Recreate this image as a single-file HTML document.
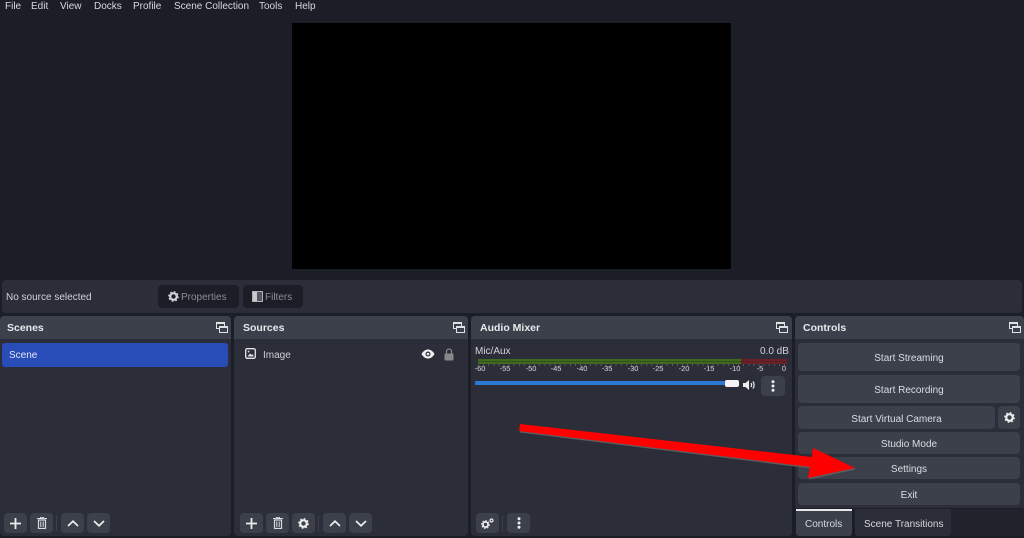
<!DOCTYPE html>
<html><head><meta charset="utf-8">
<style>
html,body{margin:0;padding:0;width:1024px;height:538px;overflow:hidden;background:#1b1d27;}
body{font-family:"Liberation Sans",sans-serif;font-size:10px;color:#d6d8de;position:relative;}
.a{position:absolute;box-sizing:border-box;}
.t{position:absolute;white-space:nowrap;}
.panel{position:absolute;background:#2b2e38;border-radius:4px;top:316px;height:220px;}
.title{position:absolute;left:0;right:0;top:0;height:23px;background:#3c404b;border-radius:4px 4px 0 0;}
.title span{position:absolute;left:7px;top:6px;font-weight:bold;font-size:10.5px;color:#e8e9ec;white-space:nowrap;}
.btn{position:absolute;background:#3c404b;border-radius:4px;display:flex;align-items:center;justify-content:center;color:#dcdee3;font-size:10px;padding-top:3px;box-sizing:border-box;}
.sb{position:absolute;background:#3c404b;border-radius:4px;top:513px;width:23px;height:20px;display:flex;align-items:center;justify-content:center;}
.dk{position:absolute;background:#1b1d27;border-radius:4px;top:285px;height:23px;}
.sep{position:absolute;top:515px;width:1px;height:16px;background:#3c404b;}
.tick{position:absolute;top:364px;font-size:7.5px;color:#d6d8de;transform:translateX(-50%);}
svg{display:block;}
</style></head>
<body>
<!-- menu -->
<div class="t" style="left:5px;top:1px">File</div>
<div class="t" style="left:31px;top:1px">Edit</div>
<div class="t" style="left:60px;top:1px">View</div>
<div class="t" style="left:94px;top:1px">Docks</div>
<div class="t" style="left:133px;top:1px">Profile</div>
<div class="t" style="left:174px;top:1px">Scene Collection</div>
<div class="t" style="left:259px;top:1px">Tools</div>
<div class="t" style="left:295px;top:1px">Help</div>
<!-- preview -->
<div class="a" style="left:292px;top:23px;width:439px;height:246px;background:#000"></div>
<!-- status -->
<div class="a" style="left:2px;top:280px;width:1020px;height:33px;background:#2b2e38;border-radius:4px"></div>
<div class="t" style="left:6px;top:292px;color:#d0d2d8">No source selected</div>
<div class="dk" style="left:158px;width:81px"></div>
<div class="dk" style="left:243px;width:60px"></div>
<svg class="a" style="left:168px;top:291px" width="11" height="11" viewBox="0 0 12 12"><circle cx="6" cy="6" r="3.6" fill="none" stroke="#d0d2d8" stroke-width="2.4"/><circle cx="6" cy="6" r="5.2" fill="none" stroke="#d0d2d8" stroke-width="1.3" stroke-dasharray="1.9 2.2"/></svg>
<div class="t" style="left:181px;top:292px;color:#8a8d96">Properties</div>
<svg class="a" style="left:252px;top:291px" width="11" height="11" viewBox="0 0 11 11"><rect x=".5" y=".5" width="10" height="10" fill="#555862" stroke="#b0b2b8"/><rect x="1" y="1" width="4" height="9" fill="#c8cad0"/></svg>
<div class="t" style="left:265px;top:292px;color:#8a8d96">Filters</div>

<!-- Scenes -->
<div class="panel" style="left:0;width:231px"><div class="title"><span>Scenes</span></div></div>
<div class="a" style="left:2px;top:343px;width:226px;height:24px;background:#284cb8;border-radius:3px"></div>
<div class="t" style="left:9px;top:350px;color:#e4e8f5">Scene</div>
<!-- Sources -->
<div class="panel" style="left:234px;width:234px"><div class="title"><span style="left:9px">Sources</span></div></div>
<svg class="a" style="left:245px;top:348px" width="11" height="11" viewBox="0 0 11 11"><rect x=".7" y=".7" width="9.6" height="9.6" rx="1.5" fill="none" stroke="#e4e5e8" stroke-width="1.3"/><path d="M2.5 8.5L5 5.5L6.5 7L7.5 6L8.8 8.500Z" fill="#e4e5e8"/><circle cx="3.6" cy="3.6" r=".9" fill="#e4e5e8"/></svg>
<div class="t" style="left:263px;top:350px;color:#d0d2d8">Image</div>
<svg class="a" style="left:421px;top:349px" width="14" height="10" viewBox="0 0 14 10"><path d="M.5 5C2.5 1.5 5 .5 7 .5S11.500 1.500 13.500 5C11.500 8.500 9 9.500 7 9.500S2.500 8.500.5 5Z" fill="#f0f0f2"/><circle cx="7" cy="5" r="2.500" fill="#2b2e38"/><circle cx="7" cy="5" r="1.300" fill="#f0f0f2"/></svg>
<svg class="a" style="left:444px;top:348px" width="10" height="13" viewBox="0 0 10 13"><path d="M2.500 6V3.500A2.500 2.500 0 0 1 7.500 3.500V6" fill="none" stroke="#85878d" stroke-width="1.200"/><rect x=".5" y="5.500" width="9" height="7" rx="1" fill="#85878d"/></svg>
<!-- Audio -->
<div class="panel" style="left:471px;width:321px"><div class="title"><span style="left:9px">Audio Mixer</span></div></div>
<div class="t" style="left:475px;top:346px;color:#d0d2d8">Mic/Aux</div>
<div class="t" style="left:760px;top:346px;color:#d0d2d8">0.0 dB</div>
<div class="a" style="left:478px;top:359px;width:263px;height:5px;background:#3f6a1c"></div>
<div class="a" style="left:741px;top:359px;width:46px;height:5px;background:#6e2028"></div>
<div class="a" style="left:478px;top:361px;width:309px;height:1px;background:rgba(30,34,40,.35)"></div>
<div class="a" style="left:478px;top:364px;width:309px;height:2px;background:repeating-linear-gradient(90deg,#565963 0,#565963 1px,transparent 1px,transparent 5.1px)"></div>
<div class="tick" style="left:480px">-60</div><div class="tick" style="left:505px">-55</div><div class="tick" style="left:531px">-50</div><div class="tick" style="left:556px">-45</div><div class="tick" style="left:582px">-40</div><div class="tick" style="left:607px">-35</div><div class="tick" style="left:633px">-30</div><div class="tick" style="left:658px">-25</div><div class="tick" style="left:684px">-20</div><div class="tick" style="left:709px">-15</div><div class="tick" style="left:735px">-10</div><div class="tick" style="left:760px">-5</div><div class="tick" style="left:784px">0</div>
<div class="a" style="left:475px;top:381px;width:252px;height:4px;background:#2a78d4"></div>
<div class="a" style="left:725px;top:380px;width:14px;height:7px;background:#f4f4f6;border-radius:2px"></div>
<svg class="a" style="left:743px;top:379px" width="13" height="12" viewBox="0 0 13 12"><path d="M0 4H2.500L6 1V11L2.500 8H0Z" fill="#eceded"/><path d="M8 4Q9.200 6 8 8M10 2.500Q12.200 6 10 9.500" fill="none" stroke="#eceded" stroke-width="1.200"/></svg>
<div class="btn" style="left:761px;top:376px;width:24px;height:20px;padding:0"><svg width="4" height="12" viewBox="0 0 4 12"><circle cx="2" cy="1.800" r="1.500" fill="#eceded"/><circle cx="2" cy="6" r="1.500" fill="#eceded"/><circle cx="2" cy="10.200" r="1.500" fill="#eceded"/></svg></div>
<!-- Controls -->
<div class="panel" style="left:795px;width:229px"><div class="title"><span style="left:8px">Controls</span></div></div>
<div class="btn" style="left:798px;top:343px;width:222px;height:28px">Start Streaming</div>
<div class="btn" style="left:798px;top:375px;width:222px;height:28px">Start Recording</div>
<div class="btn" style="left:798px;top:406px;width:197px;height:23px">Start Virtual Camera</div>
<div class="btn" style="left:998px;top:406px;width:22px;height:23px;padding:0"><svg width="11" height="11" viewBox="0 0 12 12"><circle cx="6" cy="6" r="3.600" fill="none" stroke="#eceded" stroke-width="2.400"/><circle cx="6" cy="6" r="5.200" fill="none" stroke="#eceded" stroke-width="1.300" stroke-dasharray="1.900 2.200"/></svg></div>
<div class="btn" style="left:798px;top:432px;width:222px;height:22px">Studio Mode</div>
<div class="btn" style="left:798px;top:457px;width:222px;height:22px">Settings</div>
<div class="btn" style="left:798px;top:483px;width:222px;height:22px">Exit</div>
<!-- tabs -->
<div class="a" style="left:795px;top:508px;width:229px;height:30px;background:#1b1d27"></div>
<div class="a" style="left:951px;top:509px;width:73px;height:27px;background:#21232c"></div>
<div class="a" style="left:796px;top:509px;width:56px;height:27px;background:#3c404b;border-top:2px solid #e8e8ea;border-radius:0 0 3px 3px"></div>
<div class="t" style="left:805px;top:519px;color:#d6d8de">Controls</div>
<div class="a" style="left:855px;top:509px;width:96px;height:27px;background:#2b2e38;border-radius:0 0 3px 3px"></div>
<div class="t" style="left:864px;top:519px;color:#d6d8de">Scene Transitions</div>

<!-- float icons -->
<svg class="a" style="left:216px;top:322px" width="12" height="11" viewBox="0 0 12 11"><rect x=".5" y=".5" width="8" height="6" fill="none" stroke="#e0e1e4"/><rect x="3.500" y="4.500" width="8" height="6" fill="#3c404b" stroke="#e0e1e4"/><path d="M3.500 5.500h8M.5 1.500h8" stroke="#e0e1e4"/></svg>
<svg class="a" style="left:453px;top:322px" width="12" height="11" viewBox="0 0 12 11"><rect x=".5" y=".5" width="8" height="6" fill="none" stroke="#e0e1e4"/><rect x="3.500" y="4.500" width="8" height="6" fill="#3c404b" stroke="#e0e1e4"/><path d="M3.500 5.500h8M.5 1.500h8" stroke="#e0e1e4"/></svg>
<svg class="a" style="left:776px;top:322px" width="12" height="11" viewBox="0 0 12 11"><rect x=".5" y=".5" width="8" height="6" fill="none" stroke="#e0e1e4"/><rect x="3.500" y="4.500" width="8" height="6" fill="#3c404b" stroke="#e0e1e4"/><path d="M3.500 5.500h8M.5 1.500h8" stroke="#e0e1e4"/></svg>
<svg class="a" style="left:1009px;top:322px" width="12" height="11" viewBox="0 0 12 11"><rect x=".5" y=".5" width="8" height="6" fill="none" stroke="#e0e1e4"/><rect x="3.500" y="4.500" width="8" height="6" fill="#3c404b" stroke="#e0e1e4"/><path d="M3.500 5.500h8M.5 1.500h8" stroke="#e0e1e4"/></svg>

<!-- bottom toolbars -->
<div class="sb" style="left:4px"><svg width="11" height="11" viewBox="0 0 11 11"><path d="M5.500 0V11M0 5.500H11" stroke="#eceded" stroke-width="1.800"/></svg></div>
<div class="sb" style="left:30px"><svg width="10" height="12" viewBox="0 0 10 12"><path d="M0 1.500H10M3.500 1V.3H6.500V1" stroke="#d8d9dc" fill="none"/><path d="M1.500 3H8.500V11.500H1.500Z" fill="none" stroke="#d8d9dc" stroke-width="1.200"/><path d="M3.800 4.500V10M6.200 4.500V10" stroke="#d8d9dc"/></svg></div>
<div class="sep" style="left:56px"></div>
<div class="sb" style="left:61px"><svg width="12" height="7" viewBox="0 0 12 7"><path d="M1 6L6 1.200L11 6" fill="none" stroke="#eceded" stroke-width="1.700"/></svg></div>
<div class="sb" style="left:87px"><svg width="12" height="7" viewBox="0 0 12 7"><path d="M1 1L6 5.800L11 1" fill="none" stroke="#eceded" stroke-width="1.700"/></svg></div>

<div class="sb" style="left:240px"><svg width="11" height="11" viewBox="0 0 11 11"><path d="M5.500 0V11M0 5.500H11" stroke="#eceded" stroke-width="1.800"/></svg></div>
<div class="sb" style="left:266px"><svg width="10" height="12" viewBox="0 0 10 12"><path d="M0 1.500H10M3.500 1V.3H6.500V1" stroke="#d8d9dc" fill="none"/><path d="M1.500 3H8.500V11.500H1.500Z" fill="none" stroke="#d8d9dc" stroke-width="1.200"/><path d="M3.800 4.500V10M6.200 4.500V10" stroke="#d8d9dc"/></svg></div>
<div class="sb" style="left:292px"><svg width="11" height="11" viewBox="0 0 12 12"><circle cx="6" cy="6" r="3.600" fill="none" stroke="#eceded" stroke-width="2.400"/><circle cx="6" cy="6" r="5.200" fill="none" stroke="#eceded" stroke-width="1.300" stroke-dasharray="1.900 2.200"/></svg></div>
<div class="sep" style="left:318px"></div>
<div class="sb" style="left:323px"><svg width="12" height="7" viewBox="0 0 12 7"><path d="M1 6L6 1.200L11 6" fill="none" stroke="#eceded" stroke-width="1.700"/></svg></div>
<div class="sb" style="left:349px"><svg width="12" height="7" viewBox="0 0 12 7"><path d="M1 1L6 5.800L11 1" fill="none" stroke="#eceded" stroke-width="1.700"/></svg></div>

<div class="sb" style="left:476px"><svg width="13" height="11" viewBox="0 0 13 11"><circle cx="4.500" cy="6.500" r="2.600" fill="none" stroke="#eceded" stroke-width="1.800"/><circle cx="4.500" cy="6.500" r="4" fill="none" stroke="#eceded" stroke-width="1" stroke-dasharray="1.400 1.700"/><circle cx="10.500" cy="2.500" r="1.500" fill="none" stroke="#eceded" stroke-width="1.200"/></svg></div>
<div class="sep" style="left:502px"></div>
<div class="sb" style="left:507px"><svg width="4" height="12" viewBox="0 0 4 12"><circle cx="2" cy="1.800" r="1.500" fill="#eceded"/><circle cx="2" cy="6" r="1.500" fill="#eceded"/><circle cx="2" cy="10.200" r="1.500" fill="#eceded"/></svg></div>

<!-- arrow -->
<svg class="a" style="left:0;top:0" width="1024" height="538" viewBox="0 0 1024 538">
<path d="M520 424L812 457L813 448L855 468L808 478L810 467L519 431Z" fill="#5c5c62" transform="translate(1 1.500)"/>
<path d="M520 424L812 457L813 448L855 468L808 478L810 467L519 431Z" fill="#fe0000"/>
</svg>
</body></html>
